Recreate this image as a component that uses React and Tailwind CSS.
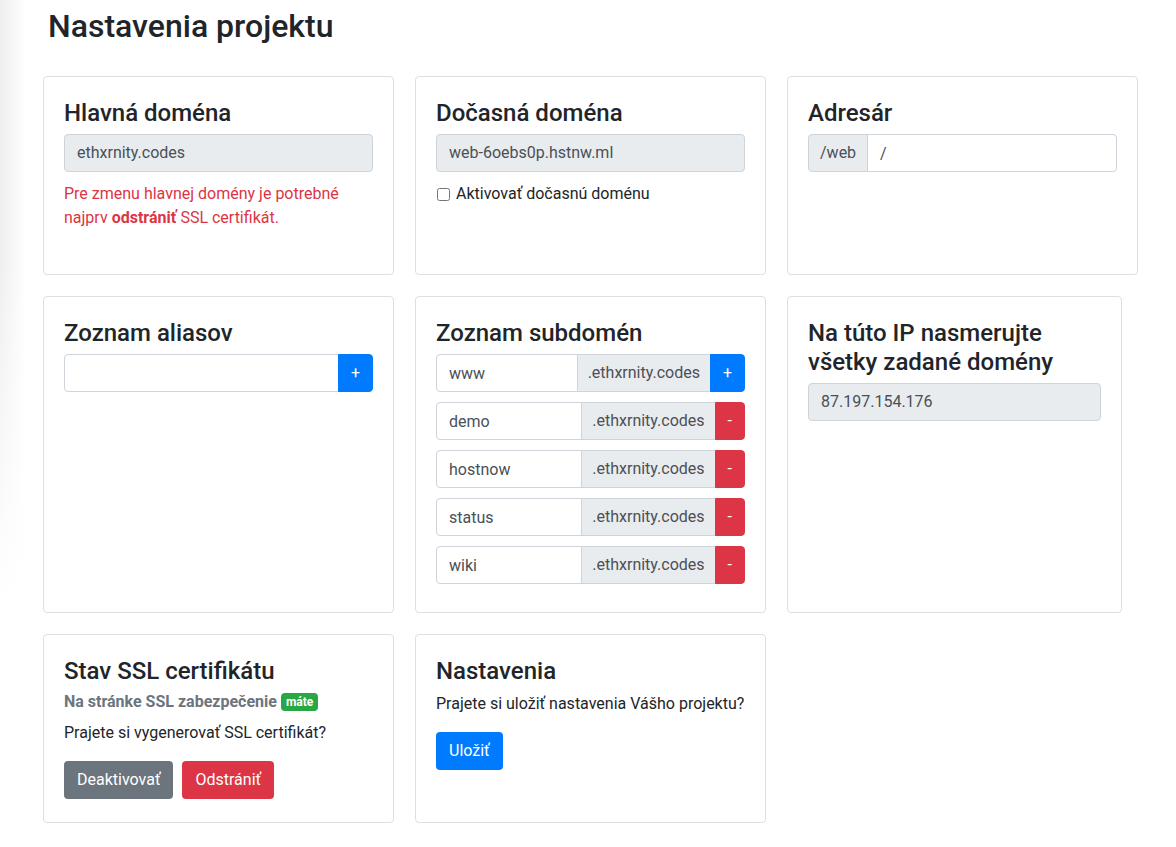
import React from 'react'

const FONT = { fontFamily: 'Roboto, "Noto Sans", "Liberation Sans", sans-serif' }

const SUBDOMAINS = ['demo', 'hostnow', 'status', 'wiki']

function Card({ className = '', children }) {
  return (
    <div className={`bg-white border border-[#dfdfdf] rounded-[4px] p-[20px] ${className}`}>
      {children}
    </div>
  )
}

function Title({ children }) {
  return (
    <h4 className="text-[24px] font-medium leading-[1.2] text-[#212529] pt-[2px] mb-[6px]">{children}</h4>
  )
}

function ReadOnly({ value }) {
  return (
    <div className="h-[38px] flex items-center px-[12px] border border-[#ced4da] rounded-[4px] bg-[#e9ecef] text-[#495057] text-[16px]">
      {value}
    </div>
  )
}

function SubRow({ name, first }) {
  return (
    <div className="flex h-[38px] mb-[10px]">
      <input
        defaultValue={name}
        className="flex-1 min-w-0 h-full px-[12px] border border-[#ced4da] rounded-l-[4px] text-[#495057] text-[16px] outline-none"
      />
      <span className="flex items-center px-[10px] -ml-px bg-[#e9ecef] border border-[#ced4da] text-[#495057] text-[16px]">
        .ethxrnity.codes
      </span>
      <button
        className={`h-full px-[12px] -ml-px rounded-r-[4px] text-white text-[16px] ${
          first ? 'bg-[#007bff] border border-[#007bff]' : 'bg-[#dc3545] border border-[#dc3545]'
        }`}
      >
        {first ? '+' : '-'}
      </button>
    </div>
  )
}

export default function App() {
  return (
    <div className="relative min-h-[847px] bg-white text-[#212529] text-[16px] leading-[1.5]" style={FONT}>
      {/* faint sidebar shadow on the left edge */}
      <div className="absolute left-0 top-0 w-[26px] h-[600px] bg-linear-to-r from-[#efefef] to-white/0">
        <div className="absolute left-0 bottom-0 w-full h-[340px] bg-linear-to-b from-white/0 to-white" />
      </div>

      <div className="relative pl-[43px] pt-[7px]">
        <h2 className="text-[32px] font-medium leading-[1.2] ml-[5px] mb-[31px]">Nastavenia projektu</h2>

        <div className="flex flex-col gap-[21px]">
          {/* row 1 */}
          <div className="flex gap-[21px] h-[199px]">
            <Card className="w-[351px]">
              <Title>Hlavná doména</Title>
              <ReadOnly value="ethxrnity.codes" />
              <p className="mt-[10px] text-[#dc3545]">
                Pre zmenu hlavnej domény je potrebné najprv <b>odstrániť</b> SSL certifikát.
              </p>
            </Card>

            <Card className="w-[351px]">
              <Title>Dočasná doména</Title>
              <ReadOnly value="web-6oebs0p.hstnw.ml" />
              <label className="mt-[10px] flex items-center gap-[6px]">
                <input type="checkbox" className="w-[13px] h-[13px] ml-px" />
                <span>Aktivovať dočasnú doménu</span>
              </label>
            </Card>

            <Card className="w-[351px]">
              <Title>Adresár</Title>
              <div className="flex h-[38px]">
                <span className="flex items-center px-[11px] bg-[#e9ecef] border border-[#ced4da] rounded-l-[4px] text-[#495057]">
                  /web
                </span>
                <input
                  defaultValue="/"
                  className="flex-1 min-w-0 h-full -ml-px px-[12px] border border-[#ced4da] rounded-r-[4px] text-[#495057] outline-none"
                />
              </div>
            </Card>
          </div>

          {/* row 2 */}
          <div className="flex gap-[21px] h-[317px]">
            <Card className="w-[351px]">
              <Title>Zoznam aliasov</Title>
              <div className="flex h-[38px]">
                <input className="flex-1 min-w-0 h-full px-[12px] border border-[#ced4da] rounded-l-[4px] outline-none" />
                <button className="h-full px-[12px] -ml-px bg-[#007bff] border border-[#007bff] rounded-r-[4px] text-white">
                  +
                </button>
              </div>
            </Card>

            <Card className="w-[351px]">
              <Title>Zoznam subdomén</Title>
              <SubRow name="www" first />
              {SUBDOMAINS.map((s) => (
                <SubRow key={s} name={s} />
              ))}
            </Card>

            <Card className="w-[335px]">
              <Title>
                Na túto IP nasmerujte
                <br />
                všetky zadané domény
              </Title>
              <ReadOnly value="87.197.154.176" />
            </Card>
          </div>

          {/* row 3 */}
          <div className="flex gap-[21px] h-[189px]">
            <Card className="w-[351px]">
              <Title>Stav SSL certifikátu</Title>
              <h6 className="mt-[1px] text-[16px] font-bold leading-[1.2] text-[#6c757d] flex items-center">
                Na stránke SSL zabezpečenie
                <span className="ml-[4px] px-[5px] py-[3px] rounded-[4px] bg-[#28a745] text-white text-[12px] font-bold leading-none">
                  máte
                </span>
              </h6>
              <p className="mt-[10px]">Prajete si vygenerovať SSL certifikát?</p>
              <div className="flex gap-[9px] mt-[16px]">
                <button className="h-[38px] px-[13px] rounded-[4px] bg-[#6c757d] text-white">Deaktivovať</button>
                <button className="h-[38px] px-[13px] rounded-[4px] bg-[#dc3545] text-white">Odstrániť</button>
              </div>
            </Card>

            <Card className="w-[351px]">
              <Title>Nastavenia</Title>
              <p className="mb-[16px]">Prajete si uložiť nastavenia Vášho projektu?</p>
              <button className="h-[38px] px-[13px] rounded-[4px] bg-[#007bff] text-white">Uložiť</button>
            </Card>
          </div>
        </div>
      </div>
    </div>
  )
}
